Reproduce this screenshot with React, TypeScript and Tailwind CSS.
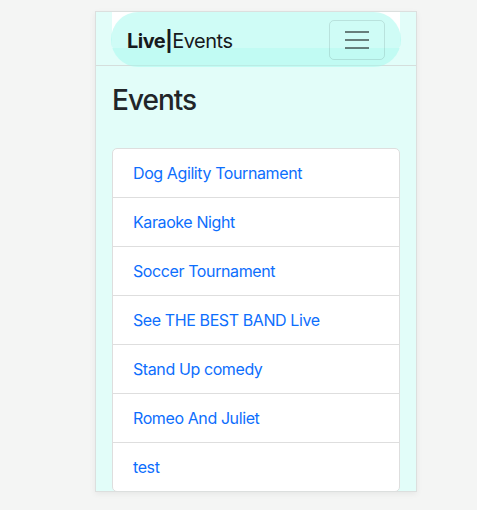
import React from "react";

const events = [
  "Dog Agility Tournament",
  "Karaoke Night",
  "Soccer Tournament",
  "See THE BEST BAND Live",
  "Stand Up comedy",
  "Romeo And Juliet",
  "test",
];

export default function App() {
  return (
    <div
      className="min-h-screen bg-[#f4f5f4] pt-[11px] pl-[95px]"
      style={{ fontFamily: "Inter, 'Noto Sans', sans-serif" }}
    >
      <div className="w-[322px] h-[481px] border border-[#dcdfde] bg-[#e2fdf9] overflow-hidden shadow-[0_2px_6px_rgba(0,0,0,0.06)] flex flex-col">
        <header className="relative h-[54px] border-b border-[#d5dedc] px-4 shrink-0">
          <div className="h-[36px] bg-white"></div>
          <div className="absolute left-[15px] top-0 w-[290px] h-[55px] rounded-full bg-[rgba(160,250,238,0.5)] flex items-center justify-between pl-[16px] pr-[16px]">
            <div className="text-[20px] leading-none text-[#161a1d] tracking-[-0.5px] mt-[2px]">
              <span className="font-bold">Live|</span>
              <span>Events</span>
            </div>
            <button className="w-[56px] h-[40px] rounded-[5px] border border-[rgba(0,0,0,0.1)] flex flex-col items-center justify-center gap-[6px] mt-[1px]">
              <span className="block w-[24px] h-[2px] bg-[rgba(0,0,0,0.5)]"></span>
              <span className="block w-[24px] h-[2px] bg-[rgba(0,0,0,0.5)]"></span>
              <span className="block w-[24px] h-[2px] bg-[rgba(0,0,0,0.5)]"></span>
            </button>
          </div>
        </header>
        <div className="px-4">
          <h2 className="mt-[18px] text-[28px] leading-[1.2] font-medium text-[#212529] tracking-[-1px]">Events</h2>
          <ul className="mt-[30px] bg-white border border-[#dedede] rounded-[5px]">
            {events.map((e, i) => (
              <li
                key={e}
                className={`px-5 py-3 text-base leading-6 tracking-[-0.4px] ${i < events.length - 1 ? "border-b border-[#dedede]" : ""}`}
              >
                <a className="text-[#0d6efd]">{e}</a>
              </li>
            ))}
          </ul>
        </div>
      </div>
    </div>
  );
}
